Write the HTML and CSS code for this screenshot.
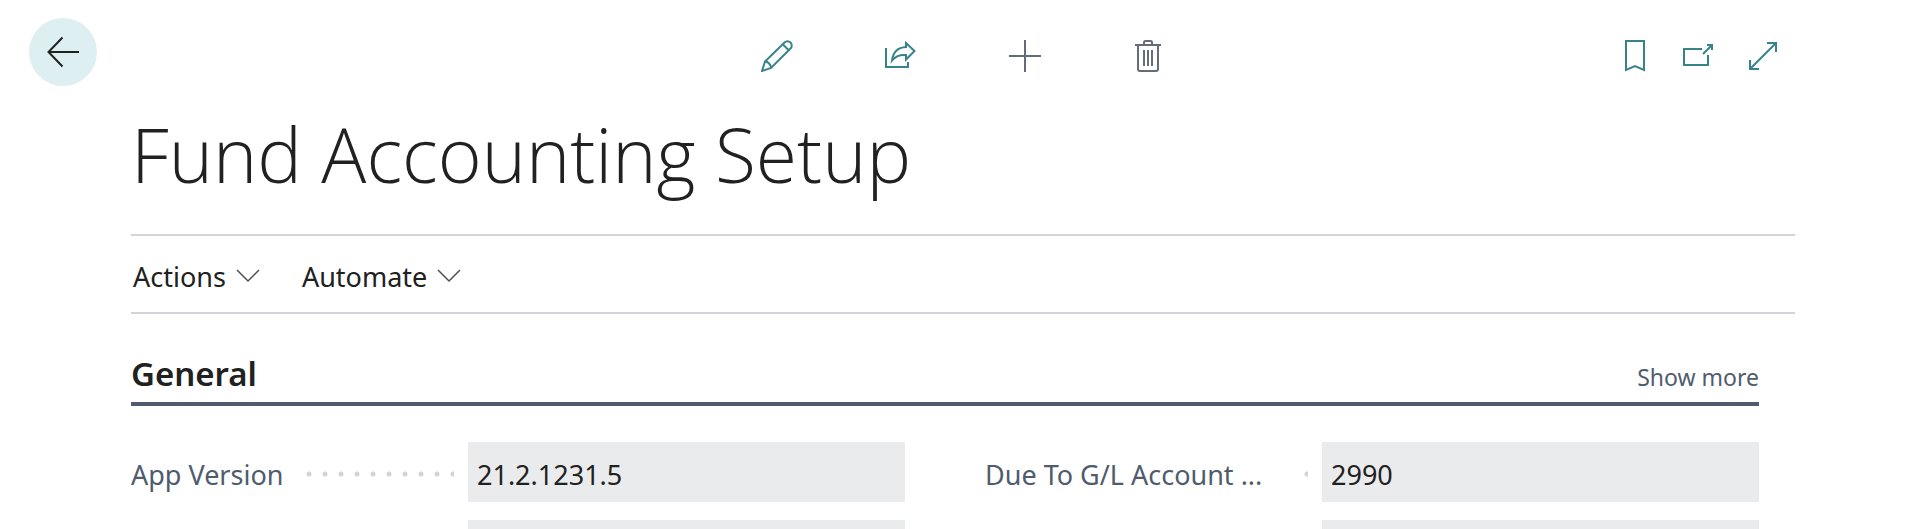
FILE: index.html
```html
<!DOCTYPE html>
<html lang="en">
<head>
<meta charset="utf-8">
<meta name="viewport" content="width=device-width, initial-scale=1">
<title>Fund Accounting Setup</title>
<link rel="stylesheet" href="styles.css">
</head>
<body>
<div class="page">
  <aside class="side">
    <button class="back" type="button" aria-label="Back">
      <svg width="32" height="32" viewBox="0 0 32 32"><path d="M32 16H2M15.500 1.500L1.500 16l14 14.500"/></svg>
    </button>
  </aside>
  <main class="main">
    <header class="toolbar">
      <div class="tools">
        <button class="tool" type="button" aria-label="Edit">
          <svg width="32" height="32" viewBox="0 0 32 32"><path d="M1 31l3-9.500L23.500 2.500a4.200 4.200 0 0 1 6 6L10 28zM22 4.500l5.500 5.500M4 21.500c3 0 6 3 6 6.500"/></svg>
        </button>
        <button class="tool" type="button" aria-label="Share">
          <svg width="32" height="32" viewBox="0 0 32 32"><path d="M1 8v19h22v-5M21 3l8.500 8L21 19.500V15c-6-.5-10.500 1-14 5.500C8 12.500 12 7.500 21 7z"/></svg>
        </button>
        <button class="tool tool-muted" type="button" aria-label="New">
          <svg width="32" height="32" viewBox="0 0 32 32"><path d="M16 0v32M0 16h32"/></svg>
        </button>
        <button class="tool tool-muted" type="button" aria-label="Delete">
          <svg width="32" height="32" viewBox="0 0 32 32"><path d="M2 5h26M5 5v24a2 2 0 0 0 2 2h16a2 2 0 0 0 2-2V5M11 5V2.500a1.500 1.500 0 0 1 1.500-1.500h5a1.500 1.500 0 0 1 1.500 1.500V5M11 10v16M15 10v16M19 10v16"/></svg>
        </button>
      </div>
      <div class="window-tools">
        <button class="tool" type="button" aria-label="Bookmark">
          <svg width="32" height="32" viewBox="0 0 32 32"><path d="M7 1h18v29l-9-4-9 4z"/></svg>
        </button>
        <button class="tool" type="button" aria-label="Open in new window">
          <svg width="32" height="32" viewBox="0 0 32 32"><path d="M19 9H1v16h24V15M20 14l9-9M24 5h5v5"/></svg>
        </button>
        <button class="tool" type="button" aria-label="Expand">
          <svg width="32" height="32" viewBox="0 0 32 32"><path d="M3 29L29 3M20 3h9v9M3 20v9h9"/></svg>
        </button>
      </div>
    </header>
    <h1 class="title">Fund Accounting Setup</h1>
    <nav class="menu">
      <button class="menu-item" type="button">Actions
        <svg width="24" height="14" viewBox="0 0 24 14"><path d="M1 1l11 11L23 1"/></svg>
      </button>
      <button class="menu-item" type="button">Automate
        <svg width="24" height="14" viewBox="0 0 24 14"><path d="M1 1l11 11L23 1"/></svg>
      </button>
    </nav>
    <section class="section">
      <div class="section-head">
        <h2 class="section-title">General</h2>
        <button class="show-more" type="button">Show more</button>
      </div>
      <div class="fields">
        <div class="field">
          <div class="caption"><label for="app-version">App Version</label><span class="leader"></span></div>
          <input class="value" id="app-version" value="21.2.1231.5" readonly>
        </div>
        <div class="field">
          <div class="caption"><label class="label-long" for="due-to">Due To G/L Account ...</label><span class="leader"></span></div>
          <input class="value" id="due-to" value="2990" readonly>
        </div>
        <div class="field">
          <div class="caption"></div>
          <input class="value" readonly>
        </div>
        <div class="field">
          <div class="caption"></div>
          <input class="value" readonly>
        </div>
      </div>
    </section>
  </main>
</div>
</body>
</html>
```
FILE: styles.css
```css
* { box-sizing: border-box; }

body {
  margin: 0;
  background: #fff;
  color: #212121;
  font-family: "Segoe UI", "Noto Sans", "Open Sans", sans-serif;
  font-size: 27px;
}

button {
  padding: 0;
  border: 0;
  background: none;
  color: inherit;
  font: inherit;
  cursor: pointer;
}

svg {
  display: block;
  fill: none;
  stroke: currentColor;
  stroke-width: 2;
}

.page {
  display: grid;
  grid-template-columns: 131px 1fr;
  height: 100vh;
  padding-right: 127px;
  overflow: hidden;
}

.side { padding: 18px 0 0 29px; }

.back {
  display: grid;
  place-items: center;
  width: 68px;
  height: 68px;
  border-radius: 50%;
  background: #ddeff0;
}

.toolbar {
  display: grid;
  grid-template-columns: 1fr auto 1fr;
  padding: 40px 16px 0 0;
}

.tools {
  display: flex;
  grid-column: 2;
  gap: 92px;
  margin-left: 16px;
}

.window-tools {
  display: flex;
  justify-content: flex-end;
  gap: 32px;
}

.tool { color: #37838a; }
.tool-muted { color: #666b7a; }

.title {
  margin: 32px 0 30px;
  font-family: "Segoe UI", "Open Sans", sans-serif;
  font-size: 75px;
  font-weight: 300;
  line-height: 100px;
}

.menu {
  display: flex;
  gap: 42px;
  height: 80px;
  padding: 4px 0 0 2px;
  border-top: 2px solid #d3d3d9;
  border-bottom: 2px solid #d3d3d9;
}

.menu-item {
  display: flex;
  align-items: center;
  gap: 10px;
}

.menu-item svg {
  color: #505050;
  stroke-width: 1.5;
}

.section { padding: 36px 36px 0 0; }

.section-head {
  display: flex;
  align-items: baseline;
  justify-content: space-between;
  padding-bottom: 4px;
  border-bottom: 4px solid #505c6d;
}

.section-title {
  margin: 0;
  font-size: 33px;
  font-weight: 600;
  line-height: 48px;
}

.show-more {
  color: #505c6d;
  font-size: 23px;
}

.fields {
  display: grid;
  grid-template-columns: 1fr 1fr;
  gap: 18px 80px;
  padding-top: 36px;
}

.field {
  display: grid;
  grid-template-columns: 337px 1fr;
}

.caption {
  display: flex;
  align-items: center;
  gap: 18px;
  padding: 4px 14px 0 0;
  color: #505c6d;
  white-space: nowrap;
}

.label-long { flex: 0 0 296px; }

.leader {
  flex: 1;
  height: 16px;
  background: radial-gradient(circle at 8px 8px, #d0d3d8 2px, transparent 3px) 0 0 / 16px 16px;
}

.value {
  width: 100%;
  min-width: 0;
  height: 60px;
  padding: 4px 9px 0;
  border: 0;
  border-radius: 0;
  outline: 0;
  background: #eaebed;
  color: #212121;
  font: inherit;
}
```
